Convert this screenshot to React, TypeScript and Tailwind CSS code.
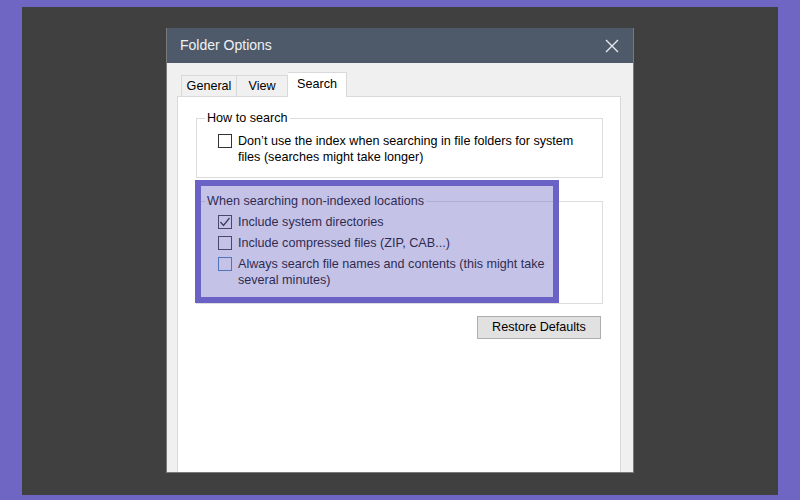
const font = { fontFamily: '"Liberation Sans", Arial, sans-serif' }

interface BoxProps {
    checked?: boolean
    blue?: boolean
}

const CheckBox = ({ checked, blue }: BoxProps) => (
    <span
        className={
            'mt-[1px] flex h-[14px] w-[14px] flex-shrink-0 items-center justify-center border bg-white ' +
            (blue ? 'border-[#3d7fb8]' : 'border-[#333333]')
        }
    >
        {checked && (
            <svg width="12" height="12" viewBox="0 0 12 12">
                <polyline
                    points="1.5,6 4.5,9.5 10.5,2"
                    fill="none"
                    stroke="#222"
                    strokeWidth="1.3"
                />
            </svg>
        )}
    </span>
)

interface RowProps {
    checked?: boolean
    blue?: boolean
    children: React.ReactNode
}

const Row = ({ checked, blue, children }: RowProps) => (
    <div className="flex gap-[6px] ml-[13px]">
        <CheckBox checked={checked} blue={blue} />
        <span className="leading-[16px]">{children}</span>
    </div>
)

const App = () => {
    return (
        <div
            className="w-[800px] h-[500px] bg-[#6f66c3] pt-[7px] px-[22px] pb-[5px] text-[12.6px] text-black"
            style={font}
        >
            <div className="h-full bg-[#404040] pl-[144px] pt-[21px] overflow-hidden">
                <div className="w-[468px] h-[445px] flex flex-col bg-[#f0f0f0] border border-t-0 border-[#7a7a7a]">
                    {/* title bar */}
                    <div className="h-[35px] flex-shrink-0 flex items-center justify-between bg-[#4e5a69] pl-[13px] pr-[14px]">
                        <span className="text-[14px] text-[#eef1f4]">Folder Options</span>
                        <svg width="14" height="14" viewBox="0 0 14 14">
                            <path d="M1 1 L13 13 M13 1 L1 13" stroke="#e6e9ed" strokeWidth="1.4" />
                        </svg>
                    </div>

                    <div className="flex-1 flex flex-col pt-[9px] pl-[10px] pr-[12px]">
                        {/* tabs */}
                        <div className="h-[24px] flex items-end pl-[4px] relative z-10">
                            <div className="h-[21px] w-[56px] flex items-center justify-center border border-b-0 border-[#d9d9d9] bg-[#f0f0f0]">
                                General
                            </div>
                            <div className="h-[21px] w-[51px] flex items-center justify-center border border-l-0 border-b-0 border-[#d9d9d9] bg-[#f0f0f0]">
                                View
                            </div>
                            <div className="h-[25px] w-[59px] -mb-[1px] flex items-start pt-[2px] justify-center border border-l-0 border-b-0 border-[#d9d9d9] bg-white">
                                Search
                            </div>
                        </div>

                        {/* panel */}
                        <div className="flex-1 bg-white border border-b-0 border-[#d9d9d9] pt-[13px] pl-[18px] pr-[17px]">
                            <fieldset className="border border-[#dcdcdc] pl-[8px] pr-[8px] pb-[12px]">
                                <legend className="px-[2px] leading-[16px]">How to search</legend>
                                <div className="pt-[7px]">
                                    <Row>
                                        Don’t use the index when searching in file folders for system
                                        <br />
                                        files (searches might take longer)
                                    </Row>
                                </div>
                            </fieldset>

                            <div className="relative mt-[15px]">
                                <fieldset className="border border-[#dcdcdc] pl-[8px] pr-[8px] pb-[15px]">
                                    <legend className="px-[2px] leading-[16px]">
                                        When searching non-indexed locations
                                    </legend>
                                    <div className="pt-[5px] flex flex-col gap-[5px]">
                                        <Row checked>Include system directories</Row>
                                        <Row>Include compressed files (ZIP, CAB...)</Row>
                                        <Row blue>
                                            Always search file names and contents (this might take
                                            <br />
                                            several minutes)
                                        </Row>
                                    </div>
                                </fieldset>
                                {/* highlight */}
                                <div className="absolute -left-[1px] -top-[13px] w-[364px] h-[123px] border-[6px] border-[#6b62c6] bg-[#6f66c3]/40" />
                            </div>

                            <div className="flex justify-end mt-[12px] pr-[2px]">
                                <button className="h-[23px] w-[124px] bg-[#e1e1e1] border border-[#adadad]">
                                    Restore Defaults
                                </button>
                            </div>
                        </div>
                    </div>
                </div>
            </div>
        </div>
    )
}

export default App
